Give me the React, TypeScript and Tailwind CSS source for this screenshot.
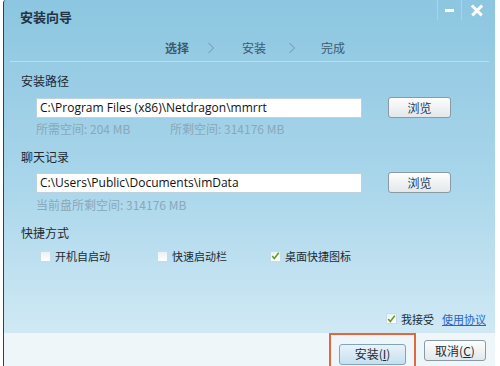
import { useState } from 'react';

const cjk = { fontFamily: '"Noto Sans CJK SC", "Open Sans", sans-serif' };
const latin = { fontFamily: '"Open Sans", "Noto Sans CJK SC", sans-serif' };

function CheckBox({ checked, label, onToggle }: { checked: boolean; label: string; onToggle: () => void }) {
    return (
        <button onClick={onToggle} className="flex items-center gap-[4px] text-[11px] text-[#1d2a33]">
            <span className="w-[11px] h-[11px] bg-gradient-to-b from-[#e9f1f5] to-[#ffffff] border border-[#c9dbe4] flex items-center justify-center">
                {checked && (
                    <svg width="10" height="10" viewBox="0 0 11 11">
                        <path d="M1.5 5.5 L4 8.5 L9.5 1.5" stroke="#5d9b1c" strokeWidth="1.8" fill="none" />
                    </svg>
                )}
            </span>
            {label}
        </button>
    );
}

function PathRow({ value, onChange }: { value: string; onChange: (v: string) => void }) {
    return (
        <div className="flex items-center pl-[32px]">
            <input
                value={value}
                onChange={(e) => onChange(e.target.value)}
                style={latin}
                className="w-[326px] h-[20px] bg-white border border-[#bcd3df] px-[3px] text-[12px] text-[#111] outline-none"
            />
            <button
                style={cjk}
                className="ml-[26px] w-[63px] h-[21px] rounded-[3px] border border-[#8a9aa5] bg-gradient-to-b from-[#fdfdfd] to-[#e3e8eb] text-[12px] text-[#1f3a55]"
            >
                浏览
            </button>
        </div>
    );
}

export default function App() {
    const [installPath, setInstallPath] = useState('C:\\Program Files (x86)\\Netdragon\\mmrrt');
    const [chatPath, setChatPath] = useState('C:\\Users\\Public\\Documents\\imData');
    const [autoStart, setAutoStart] = useState(false);
    const [quickLaunch, setQuickLaunch] = useState(false);
    const [desktopIcon, setDesktopIcon] = useState(true);
    const [accept, setAccept] = useState(true);

    return (
        <div className="w-[500px] h-[366px] bg-white pl-[3px] overflow-hidden" style={cjk}>
            <div className="w-[492px] h-[366px] border-l border-[#3a3f44] rounded-tl-[3px] flex flex-col bg-gradient-to-b from-[#8cc6e0] via-[#a9d6eb] to-[#d8edf6]">
                {/* title bar */}
                <div className="h-[34px] grid grid-cols-[1fr_25px_29px] items-start pr-[4px]">
                    <div className="pl-[16px] pt-[7px] text-[13px] font-bold text-[#1f3444]">安装向导</div>
                    <div className="h-[20px] border-l border-r border-[#a9d3e6] flex items-center justify-center">
                        <div className="w-[9px] h-[3px] bg-white" />
                    </div>
                    <div className="h-[20px] flex items-center justify-center">
                        <div className="relative w-[12px] h-[12px]">
                            <div className="absolute left-[-1px] top-[5px] w-[14px] h-[2.5px] bg-white rotate-45" />
                            <div className="absolute left-[-1px] top-[5px] w-[14px] h-[2.5px] bg-white -rotate-45" />
                        </div>
                    </div>
                </div>

                {/* steps */}
                <div className="h-[27px] flex items-center pl-[161px] text-[12px] text-[#3b5a70]">
                    <span className="font-bold">选择</span>
                    <span className="ml-[18px]">
                        <svg width="8" height="12" viewBox="0 0 8 12"><path d="M1.5 1 L6.5 6 L1.5 11" stroke="#6c94ad" strokeWidth="1" fill="none" /></svg>
                    </span>
                    <span className="ml-[27px]">安装</span>
                    <span className="ml-[22px]">
                        <svg width="8" height="12" viewBox="0 0 8 12"><path d="M1.5 1 L6.5 6 L1.5 11" stroke="#6c94ad" strokeWidth="1" fill="none" /></svg>
                    </span>
                    <span className="ml-[25px]">完成</span>
                </div>
                <div className="mx-[6px] h-px bg-[#7fb3cc] border-b border-[#b9e0f0]" />

                {/* install path */}
                <div className="pl-[17px] mt-[10px] text-[12px] text-[#1d2a33]">安装路径</div>
                <div className="mt-[7px]"><PathRow value={installPath} onChange={setInstallPath} /></div>
                <div className="pl-[32px] mt-[2px] flex text-[12px] text-[#89a8b8]">
                    <span className="w-[134px]">所需空间: 204 MB</span>
                    <span>所剩空间: 314176 MB</span>
                </div>

                {/* chat records */}
                <div className="pl-[17px] mt-[10px] text-[12px] text-[#1d2a33]">聊天记录</div>
                <div className="mt-[6px]"><PathRow value={chatPath} onChange={setChatPath} /></div>
                <div className="pl-[32px] mt-[3px] text-[12px] text-[#89a8b8]">当前盘所剩空间: 314176 MB</div>

                {/* shortcuts */}
                <div className="pl-[17px] mt-[10px] text-[12px] text-[#1d2a33]">快捷方式</div>
                <div className="pl-[36px] mt-[6px] flex">
                    <div className="w-[117px]"><CheckBox checked={autoStart} label="开机自启动" onToggle={() => setAutoStart(!autoStart)} /></div>
                    <div className="w-[113px]"><CheckBox checked={quickLaunch} label="快速启动栏" onToggle={() => setQuickLaunch(!quickLaunch)} /></div>
                    <CheckBox checked={desktopIcon} label="桌面快捷图标" onToggle={() => setDesktopIcon(!desktopIcon)} />
                </div>

                {/* agreement */}
                <div className="mt-auto flex items-center justify-end pr-[9px] pb-[6px] text-[12px]">
                    <CheckBox checked={accept} label="我接受" onToggle={() => setAccept(!accept)} />
                    <a className="ml-[8px] text-[11px] text-[#2a63c9] underline">使用协议</a>
                </div>

                {/* footer */}
                <div className="h-[33px] bg-[#eef6fa] flex items-start justify-end pr-[9px]">
                    <div className="border-2 border-[#e0683c] px-[8px] pt-[5px] pb-[5px]">
                        <button className="w-[67px] h-[21px] rounded-[3px] border border-[#7fa4bb] bg-gradient-to-b from-[#e8f3fa] to-[#c6e0ef] text-[12px] text-[#1d2a33]">
                            安装(<span className="underline">I</span>)
                        </button>
                    </div>
                    <button className="ml-[8px] mt-[7px] w-[62px] h-[21px] rounded-[3px] border border-[#8a9aa5] bg-gradient-to-b from-[#fdfdfd] to-[#e3e8eb] text-[12px] text-[#1d2a33]">
                        取消(<span className="underline">C</span>)
                    </button>
                </div>
            </div>
        </div>
    );
}
